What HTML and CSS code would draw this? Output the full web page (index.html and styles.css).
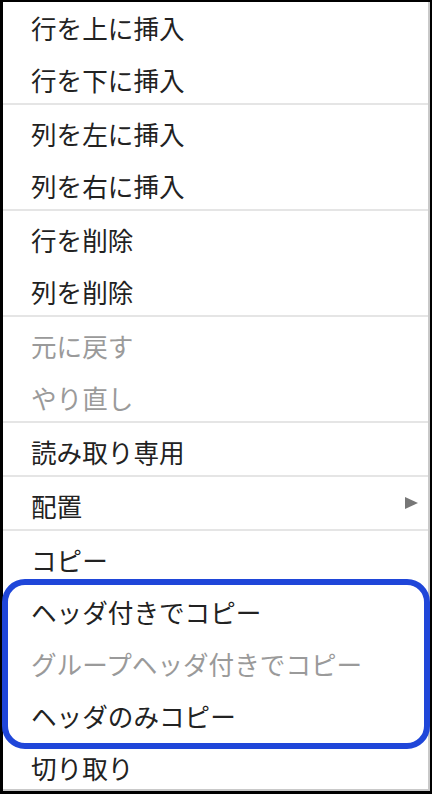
FILE: index.html
```html
<!DOCTYPE html>
<html>
<head>
	<meta charset="UTF-8">
	<title>コンテキストメニュー</title>
	<link rel="stylesheet" href="styles.css">
</head>
<body>
	<div class="screen">
		<div class="panel">
			<ul class="menu">
				<li class="item">行を上に挿入</li>
				<li class="item">行を下に挿入</li>
				<li class="sep"></li>
				<li class="item">列を左に挿入</li>
				<li class="item">列を右に挿入</li>
				<li class="sep"></li>
				<li class="item">行を削除</li>
				<li class="item">列を削除</li>
				<li class="sep"></li>
				<li class="item off">元に戻す</li>
				<li class="item off">やり直し</li>
				<li class="sep"></li>
				<li class="item">読み取り専用</li>
				<li class="sep"></li>
				<li class="item sub">配置<span class="arrow"></span></li>
				<li class="sep"></li>
				<li class="item">コピー</li>
				<li class="item">ヘッダ付きでコピー</li>
				<li class="item off">グループヘッダ付きでコピー</li>
				<li class="item">ヘッダのみコピー</li>
				<li class="item">切り取り</li>
			</ul>
		</div>
		<div class="mark"></div>
	</div>
</body>
</html>
```

FILE: styles.css
```css
*{
	margin: 0;
	padding: 0;
}
body{
	background: #000;
}
.screen{
	width: 432px;
	height: 794px;
	background: #000;
	position: relative;
	overflow: hidden;
	padding-top: 2px;
	box-sizing: border-box;
}
.panel{
	margin-left: 3px;
	width: 427px;
	height: 789px;
	box-sizing: border-box;
	background: #fff;
	border-right: 2px solid #c9c9c9;
	border-bottom: 2px solid #c9c9c9;
	overflow: hidden;
}
.menu{
	list-style: none;
	margin-top: -3px;
	font-family: "Noto Sans CJK JP", "Noto Sans", sans-serif;
	font-size: 25.6px;
	color: #222;
}
.item{
	height: 52px;
	line-height: 46px;
	padding: 6px 0 0 28px;
	box-sizing: border-box;
	white-space: nowrap;
	display: flex;
	align-items: center;
}
.item.off{
	color: #9a9a9a;
}
.sep{
	height: 2px;
	background: #e5e5e5;
}
.sub{
	justify-content: space-between;
	padding-right: 10px;
}
.arrow{
	width: 0;
	height: 0;
	border-top: 6px solid transparent;
	border-bottom: 6px solid transparent;
	border-left: 13px solid #777;
	margin-top: -6px;
}
.mark{
	position: absolute;
	left: 2px;
	top: 579px;
	width: 428px;
	height: 170px;
	box-sizing: border-box;
	border: 6px solid #1f46d9;
	border-radius: 23px;
}
```
